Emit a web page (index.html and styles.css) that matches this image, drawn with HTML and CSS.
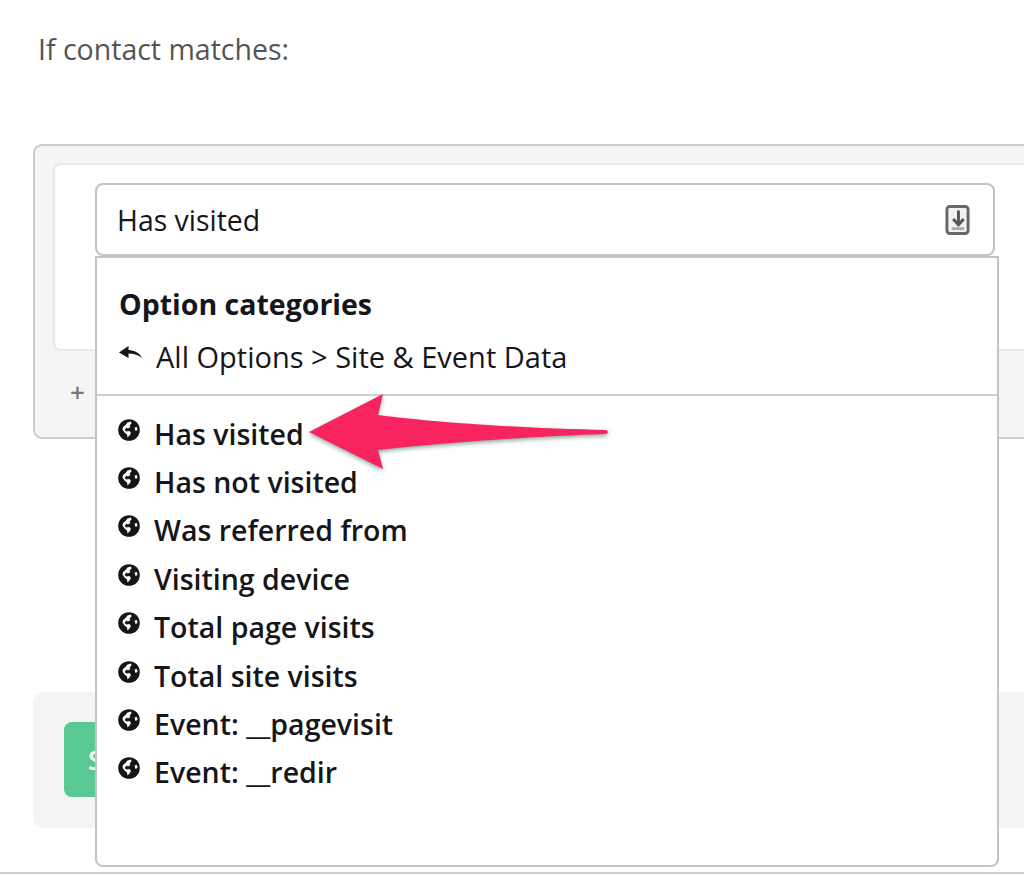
FILE: index.html
```html
<!DOCTYPE html>
<html lang="en">
<head>
  <meta charset="UTF-8">
  <title>If contact matches</title>
  <link rel="stylesheet" href="styles.css">
</head>
<body>
  <svg class="defs" width="0" height="0">
    <symbol id="globe" viewBox="0 0 22 22">
      <circle cx="11" cy="11" r="10.8" fill="#16161a"/>
      <path d="M9.500 3.500l3.500-1 .5 2-2 2 1 1.500-2.500 1.500-1.500-1-2 2.500 2 1.500 3-.5 1.500 2-1.500 2.500-2 2-.5-3-2.500-2-2-3 .5-2.500 2-1.500z" fill="#fff"/>
      <path d="M16.500 8.500l2.500-.5.500 3-2 1z" fill="#fff"/>
    </symbol>
  </svg>

  <div class="page">
    <p class="lead">If contact matches:</p>

    <div class="rules">
      <div class="rule-box">
        <div class="select">
          <span>Has visited</span>
          <svg class="select-icon" width="25" height="32" viewBox="0 0 26 32">
            <rect x="2" y="2" width="22" height="28" rx="3" fill="#f2f2f2" stroke="#666" stroke-width="3"/>
            <path d="M14 6v13M8.500 15l5.500 6 5.500-6" fill="none" stroke="#555" stroke-width="3"/>
            <path d="M7 25h13" stroke="#aaa" stroke-width="3"/>
          </svg>
        </div>
      </div>
      <div class="rule-add">+</div>
    </div>

    <div class="actions">
      <button class="save">Save</button>
    </div>

    <div class="page-end"></div>
  </div>

  <div class="menu">
    <div class="menu-head">
      <h4>Option categories</h4>
      <div class="crumb">
        <svg width="24" height="18" viewBox="0 0 24 18"><path d="M0 8.500L9.500 2v4c6 .5 11 2.500 13.500 8-3.500-3-8-4.500-13.500-4.500V14z" fill="#16161a"/></svg>
        <span>All Options &gt; Site &amp; Event Data</span>
      </div>
    </div>
    <ul class="options">
      <li><svg class="globe"><use href="#globe"/></svg>Has visited</li>
      <li><svg class="globe"><use href="#globe"/></svg>Has not visited</li>
      <li><svg class="globe"><use href="#globe"/></svg>Was referred from</li>
      <li><svg class="globe"><use href="#globe"/></svg>Visiting device</li>
      <li><svg class="globe"><use href="#globe"/></svg>Total page visits</li>
      <li><svg class="globe"><use href="#globe"/></svg>Total site visits</li>
      <li><svg class="globe"><use href="#globe"/></svg>Event: __pagevisit</li>
      <li><svg class="globe"><use href="#globe"/></svg>Event: __redir</li>
    </ul>
  </div>

  <svg class="arrow" width="310" height="84" viewBox="0 0 310 84">
    <path d="M1 39L75 1 70 22C130 30 230 36 298 37Q302 39 298 41C230 43 130 50 70 57L75 76z" fill="#f7245f"/>
  </svg>
</body>
</html>
```

FILE: styles.css
```css
html, body {
  margin: 0;
  height: 876px;
  overflow: hidden;
  background: #fff;
}
body {
  position: relative;
  font-family: "Open Sans", sans-serif;
  color: #16161a;
}
.defs {
  display: block;
  height: 0;
}
.page {
  padding: 30px 0 0 33px;
}
.lead {
  margin: 0 0 76px 5px;
  font-size: 28.5px;
  line-height: 38px;
  color: #555;
}
.rules {
  height: 295px;
  padding: 17px 0 0 18px;
  box-sizing: border-box;
  background: #f5f5f5;
  border: 2px solid #ccc;
  border-right: 0;
  border-radius: 9px 0 0 9px;
  position: relative;
}
.rule-box {
  height: 188px;
  padding: 18px 0 0 40px;
  box-sizing: border-box;
  background: #fff;
  border: 2px solid #eaeaea;
  border-right: 0;
  border-radius: 8px 0 0 8px;
}
.select {
  width: 900px;
  height: 73px;
  padding: 0 23px 0 20px;
  box-sizing: border-box;
  display: flex;
  align-items: center;
  justify-content: space-between;
  background: #fff;
  border: 2px solid #c4c4c4;
  border-radius: 8px;
  font-size: 28.4px;
}
.rule-add {
  margin: 26px 0 0 17px;
  font-size: 26px;
  line-height: 30px;
  font-weight: 600;
  color: #777;
}
.actions {
  height: 136px;
  margin-top: 253px;
  padding: 30px 0 0 31px;
  box-sizing: border-box;
  background: #f4f4f4;
  border-radius: 10px 0 0 10px;
}
.save {
  width: 140px;
  height: 75px;
  padding: 0 0 0 24px;
  text-align: left;
  background: #5ac892;
  color: #fff;
  border: 0;
  border-radius: 8px;
  font: 600 27px "Open Sans", sans-serif;
}
.page-end {
  height: 2px;
  margin: 44px 0 0 -33px;
  background: #ccc;
}
.menu {
  position: absolute;
  left: 95px;
  top: 256px;
  width: 904px;
  height: 611px;
  box-sizing: border-box;
  background: #fff;
  border: 2px solid #c4c4c4;
  border-radius: 0 0 8px 8px;
}
.menu-head {
  height: 138px;
  padding: 28px 0 0 22px;
  box-sizing: border-box;
  border-bottom: 2px solid #d0d0d0;
}
.menu-head h4 {
  margin: 0 0 17px;
  font-size: 28.5px;
  line-height: 36px;
  font-weight: 700;
}
.crumb {
  display: flex;
  align-items: center;
  gap: 13px;
  font-size: 29px;
  line-height: 36px;
  font-weight: 500;
}
.crumb svg {
  margin-bottom: 8px;
}
.options {
  list-style: none;
  margin: 0;
  padding: 13.5px 0 0 21px;
}
.options li {
  display: flex;
  align-items: center;
  gap: 14px;
  height: 48.4px;
  font-size: 28.5px;
  font-weight: 600;
}
.globe {
  width: 22px;
  height: 22px;
  margin-bottom: 8px;
}
.arrow {
  position: absolute;
  left: 308px;
  top: 393px;
  filter: drop-shadow(0 2px 2px rgba(0, 60, 40, 0.45));
}
```
